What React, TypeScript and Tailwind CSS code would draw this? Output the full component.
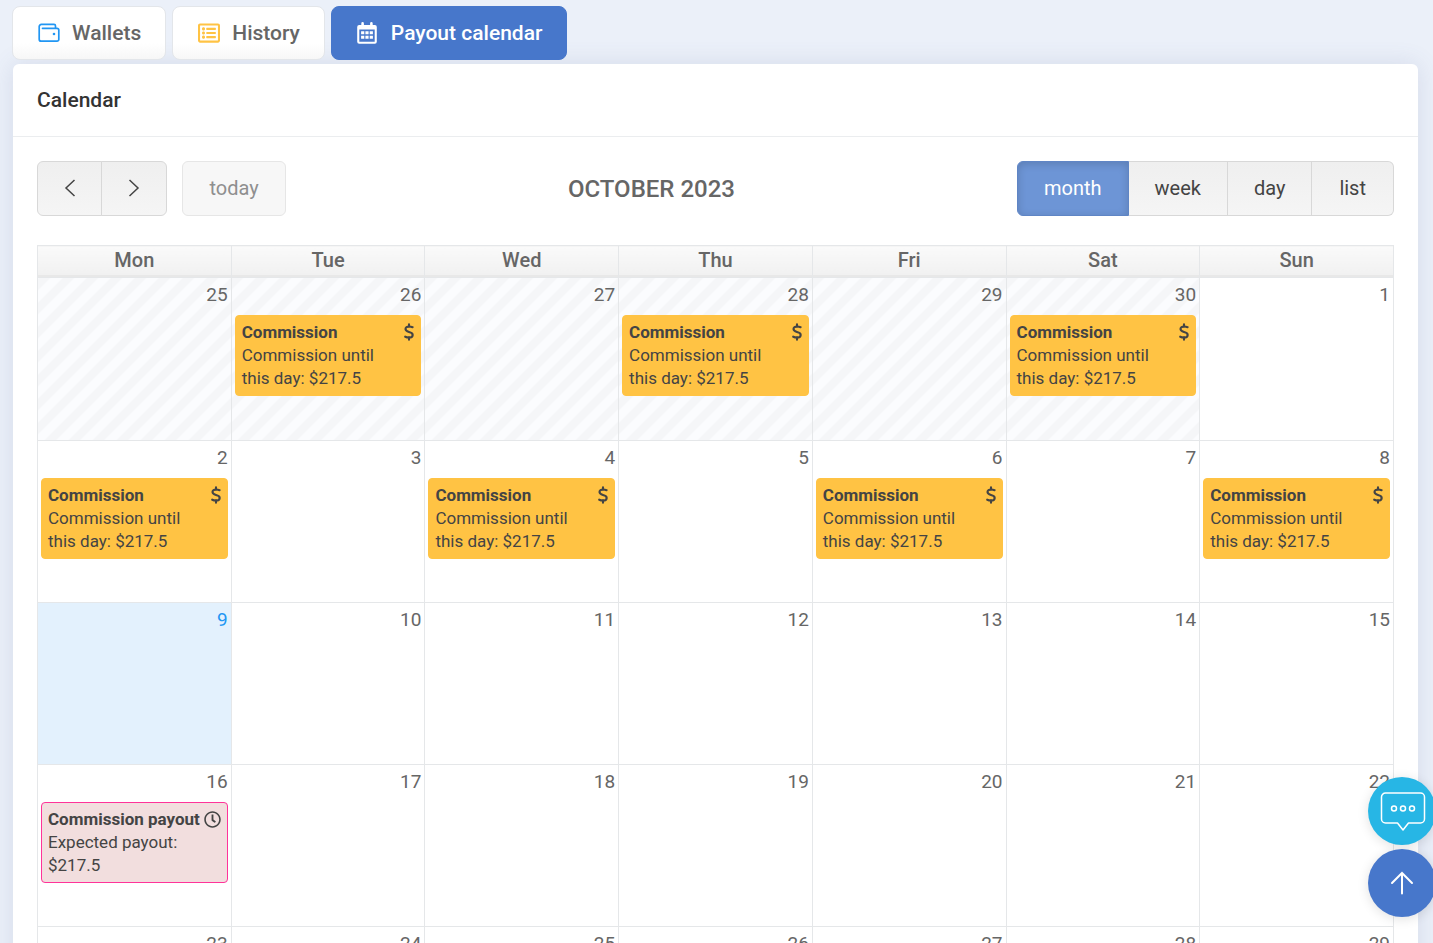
import type { ReactNode } from "react";
import { FaRegClock, FaRegListAlt } from "react-icons/fa";

type EventKind = "commission" | "payout";

interface DayInfo {
  day: number;
  past?: boolean;
  today?: boolean;
  event?: EventKind;
}

const weekdays = ["Mon", "Tue", "Wed", "Thu", "Fri", "Sat", "Sun"];

const week = (first: number, events: Record<number, EventKind> = {}): DayInfo[] =>
  weekdays.map((_, i) => ({ day: first + i, today: first + i === 9, event: events[first + i] }));

const weeks: DayInfo[][] = [
  [
    { day: 25, past: true },
    { day: 26, past: true, event: "commission" },
    { day: 27, past: true },
    { day: 28, past: true, event: "commission" },
    { day: 29, past: true },
    { day: 30, past: true, event: "commission" },
    { day: 1 },
  ],
  week(2, { 2: "commission", 4: "commission", 6: "commission", 8: "commission" }),
  week(9),
  week(16, { 16: "payout" }),
  week(23),
];

function WalletIcon() {
  return (
    <svg viewBox="0 0 22 20" className="h-5 w-[22px] text-[#2196f3]" fill="none" stroke="currentColor" strokeWidth="1.7" strokeLinecap="round" strokeLinejoin="round" aria-hidden="true">
      <path d="M4.5 5.3H19a1.8 1.8 0 0 1 1.8 1.8v9.3a1.8 1.8 0 0 1-1.8 1.8H3.2a2 2 0 0 1-2-2V3.6a2.2 2.2 0 0 1 2.2-2.2H16a1.5 1.5 0 0 1 1.5 1.5v2.2" />
      <circle cx="16" cy="11" r="1.3" fill="currentColor" stroke="none" />
    </svg>
  );
}

function CalendarIcon() {
  return (
    <svg viewBox="0 0 20 22" className="h-[22px] w-5" fill="currentColor" aria-hidden="true">
      <path fillRule="evenodd" d="M4.3 1.4a1.2 1.2 0 0 1 2.6 0V3h6.2V1.4a1.2 1.2 0 0 1 2.6 0V3h2a2 2 0 0 1 2.1 2v14.8a2 2 0 0 1-2 2H2.2a2 2 0 0 1-2-2V5a2 2 0 0 1 2-2h2.1V1.4ZM2.3 7.6v12.1h15.4V7.6H2.3Z" />
      <path d="M4.1 9.2h3.2v3H4.100zM8.4 9.2h3.2v3H8.400zM12.7 9.2h3.2v3h-3.2zM4.1 13.7h3.2v3H4.100zM8.4 13.7h3.2v3H8.400zM12.7 13.7h3.2v3h-3.2z" />
    </svg>
  );
}

function DollarIcon() {
  return (
    <svg viewBox="0 0 10 18" className="h-[18px] w-2.5 -mt-0.5" fill="none" stroke="currentColor" strokeWidth="2.1" strokeLinecap="round" aria-hidden="true">
      <path d="M5 1.2v2.400M5 14.400v2.400" />
      <path d="M8.600 4.200C7.600 3.800 6.400 3.500 5.200 3.500 3 3.500 1.500 4.400 1.500 6.100c0 1.700 1.300 2.300 3.500 2.900 2.400.6 3.700 1.300 3.700 2.900s-1.500 2.600-3.700 2.600c-1.500 0-2.700-.3-3.800-.8" />
    </svg>
  );
}

function Tab({ icon, label, active = false }: { icon: ReactNode; label: string; active?: boolean }) {
  return (
    <a
      href="#"
      aria-current={active ? "page" : undefined}
      className={
        "flex h-[54px] items-center gap-3 rounded-lg border px-6 pt-px text-[21px] font-medium " +
        (active
          ? "border-[#4777cb] bg-[#4777cb] text-white"
          : "border-[#e3e6ea] bg-linear-to-b from-white from-70% to-[#f7f7f7] text-[#666]")
      }
    >
      <span className="-mt-px flex w-[23px] pl-px">{icon}</span>
      {label}
    </a>
  );
}

function CalendarEvent({ kind }: { kind: EventKind }) {
  const payout = kind === "payout";
  return (
    <div
      className={
        "mx-[3px] rounded border px-1.5 py-[5px] text-[17px] leading-[23px] text-[#444] " +
        (payout ? "border-[#ff3399] bg-[#f2dede]" : "border-[#ffc344] bg-[#ffc344]")
      }
    >
      <div className="flex h-[23px] items-center justify-between whitespace-nowrap">
        <strong className="font-bold">{payout ? "Commission payout" : "Commission"}</strong>
        {payout ? <FaRegClock className="size-[17px] shrink-0" /> : <DollarIcon />}
      </div>
      {payout ? (
        <p>Expected payout:<br />$217.5</p>
      ) : (
        <p>Commission until<br />this day: $217.5</p>
      )}
    </div>
  );
}

function DayCell({ info }: { info: DayInfo }) {
  return (
    <td
      className={
        "border border-[#e5e7e9] p-0 align-top " +
        (info.past
          ? "bg-[linear-gradient(135deg,#f5f6f8_25%,#fbfcfe_25%_50%,#f5f6f8_50%_75%,#fbfcfe_75%)] bg-size-[24px_24px]"
          : info.today
            ? "bg-[#e3f1fd]"
            : "")
      }
    >
      <div
        className={
          "h-[37px] pt-[3px] pr-[3px] text-right text-[19px] leading-7 " + (info.today ? "text-[#2196f3]" : "text-[#666]")
        }
      >
        {info.day}
      </div>
      {info.event && <CalendarEvent kind={info.event} />}
    </td>
  );
}

const grayButton = "h-[55px] border border-[#d8d8d8] bg-linear-to-b from-[#efefef] to-[#f5f5f5] text-[#444]";

function Chevron({ d }: { d: string }) {
  return (
    <svg viewBox="0 0 12 18" className="h-[18px] w-3" fill="none" stroke="currentColor" strokeWidth="1.5" aria-hidden="true">
      <path d={d} />
    </svg>
  );
}

export default function App() {
  return (
    <div className="h-screen overflow-x-hidden overflow-y-auto bg-[#ebf0f9] font-[Roboto,sans-serif] [scrollbar-width:none]">
      <nav className="flex gap-1.5 px-3 pt-1.5">
        <Tab icon={<WalletIcon />} label="Wallets" />
        <Tab icon={<FaRegListAlt className="size-[22px] text-[#ffc344]" />} label="History" />
        <Tab active icon={<CalendarIcon />} label="Payout calendar" />
      </nav>

      <main className="mt-1 mr-[15px] ml-[13px] rounded-md bg-white shadow-[0_0_24px_rgba(80,95,140,0.14)]">
        <header className="border-b border-[#ebedef] px-6 py-[22px]">
          <h1 className="text-[21px] leading-7 font-medium text-[#333]">Calendar</h1>
        </header>

        <div className="px-6 pt-6 pb-6">
          <div className="flex items-center justify-between">
            <div className="flex gap-[15px]">
              <div className="flex">
                <button type="button" aria-label="Previous month" className={grayButton + " flex w-[65px] items-center justify-center rounded-l-md pb-0.5"}>
                  <Chevron d="M10.5 1 2 9l8.5 8" />
                </button>
                <button type="button" aria-label="Next month" className={grayButton + " -ml-px flex w-[66px] items-center justify-center rounded-r-md pb-0.5"}>
                  <Chevron d="M1.5 1 10 9l-8.5 8" />
                </button>
              </div>
              <button type="button" disabled className="h-[55px] w-[104px] rounded-md border border-[#e6e6e6] bg-[#f7f7f7] pb-0.5 text-xl text-[#8f8f8f]">
                today
              </button>
            </div>
            <h2 className="text-2xl font-medium text-[#666]">OCTOBER 2023</h2>
            <div className="flex text-xl">
              <button type="button" className="h-[55px] rounded-l-md border border-[#5f85c5] bg-[#6d95d6] px-[26px] pb-0.5 text-white shadow-[inset_0_2px_8px_rgba(0,0,0,0.16)]">
                month
              </button>
              <button type="button" className={grayButton + " border-l-0 px-[26px] pb-0.5"}>week</button>
              <button type="button" className={grayButton + " border-l-0 px-[26px] pb-0.5"}>day</button>
              <button type="button" className={grayButton + " rounded-r-md border-l-0 px-[27px] pb-0.5"}>list</button>
            </div>
          </div>

          <table className="mt-[29px] w-full table-fixed border-collapse">
            <thead>
              <tr>
                {weekdays.map((name) => (
                  <th
                    key={name}
                    scope="col"
                    className="h-8 border border-[#e5e7e9] bg-linear-to-b from-[#fafafa] to-[#f0f0f0] p-0 align-top text-xl leading-7 font-medium text-[#666] shadow-[inset_0_-2px_0_#e8e8e8]"
                  >
                    {name}
                  </th>
                ))}
              </tr>
            </thead>
            <tbody>
              {weeks.map((days) => (
                <tr key={days[0].day} className="h-[162px] first:h-[163px]">
                  {days.map((info) => (
                    <DayCell key={info.day} info={info} />
                  ))}
                </tr>
              ))}
            </tbody>
          </table>
        </div>
      </main>

      <div className="fixed -right-[3px] bottom-[26px] flex flex-col gap-1 text-white">
        <button type="button" aria-label="Open chat" className="flex size-[68px] items-center justify-center rounded-full bg-[#27b6e5] pl-0.5 shadow-[0_2px_12px_rgba(0,0,0,0.12)]">
          <svg viewBox="0 0 46 40" className="h-10 w-[46px]" fill="none" stroke="currentColor" strokeWidth="1.5" strokeLinejoin="round" aria-hidden="true">
            <path d="M5.5 2h35a4 4 0 0 1 4 4v22a4 4 0 0 1-4 4h-12L23 39 17.500 32H5.5a4 4 0 0 1-4-4V6a4 4 0 0 1 4-4Z" />
            <circle cx="14" cy="17.500" r="2.500" />
            <circle cx="23" cy="17.500" r="2.500" />
            <circle cx="32" cy="17.500" r="2.500" />
          </svg>
        </button>
        <button type="button" aria-label="Back to top" className="flex size-[68px] items-center justify-center rounded-full bg-[#4777cb] shadow-[0_2px_12px_rgba(0,0,0,0.12)]">
          <svg viewBox="0 0 24 24" className="size-6" fill="none" stroke="currentColor" strokeWidth="2" strokeLinecap="round" aria-hidden="true">
            <path d="M12 22.500V2M2 12 12 2l10 10" />
          </svg>
        </button>
      </div>
    </div>
  );
}
